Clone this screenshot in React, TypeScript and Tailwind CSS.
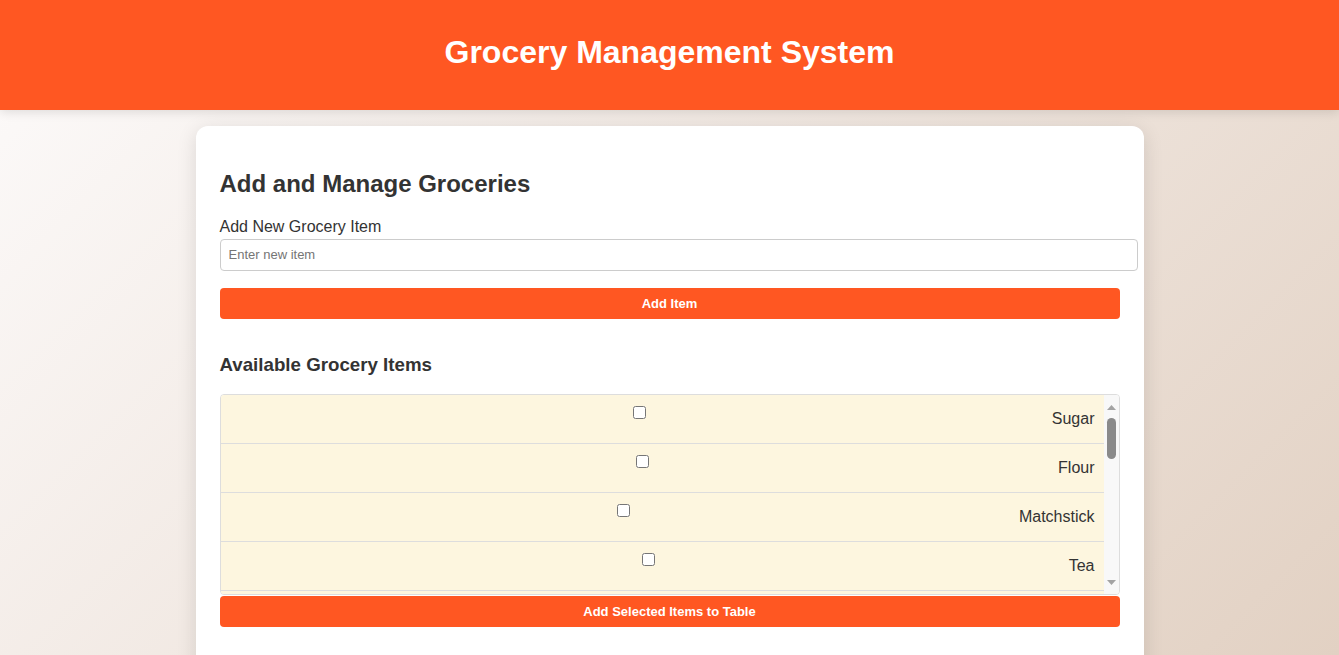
const groceries = [
  "Sugar",
  "Flour",
  "Matchstick",
  "Tea",
  "Rice",
  "Salt",
  "Milk",
  "Eggs",
  "Bread",
  "Butter",
  "Oil",
  "Coffee",
  "Lentils",
  "Soap",
];

function GroceryRow({ name }: { name: string }) {
  return (
    <li className="flex h-[49px] shrink-0 border-b border-[#ddd] bg-[#fdf6df] pl-[7px] pr-[9px]">
      <div className="flex flex-1 justify-center pt-[11px]">
        <input type="checkbox" className="m-0 h-[13px] w-[13px]" />
      </div>
      <label className="self-center text-base text-[#333]">{name}</label>
    </li>
  );
}

// headless browser hides native scrollbars, so draw the classic one
function ScrollBar() {
  return (
    <div className="flex w-[15px] shrink-0 flex-col bg-[#f8f8f8]">
      <div className="flex h-[20px] justify-center pt-[10px]">
        <svg width="9" height="5" viewBox="0 0 9 5">
          <path d="M4.5 0L9 5H0z" fill="#a3a3a3" />
        </svg>
      </div>
      <div className="mx-[3px] mt-[3px] h-[41px] rounded-full bg-[#8a8a8a]" />
      <div className="flex-1" />
      <div className="flex h-[20px] justify-center pt-[6px]">
        <svg width="9" height="5" viewBox="0 0 9 5">
          <path d="M0 0H9L4.5 5z" fill="#a3a3a3" />
        </svg>
      </div>
    </div>
  );
}

export default function App() {
  return (
    <div className="min-h-screen bg-[linear-gradient(135deg,#fdfbfb,#e2d1c3)] bg-fixed font-['Liberation_Sans',Arial,sans-serif] text-[#333]">
      <header className="flex h-[110px] items-center justify-center bg-[#ff5722] pb-[6px] shadow-[0_2px_10px_rgba(0,0,0,0.12)]">
        <h1 className="text-[32px] font-bold text-white">Grocery Management System</h1>
      </header>

      <main className="mx-auto mt-4 w-[948px] rounded-xl bg-white p-6 pb-10 shadow-[0_4px_20px_rgba(0,0,0,0.12)]">
        <h2 className="mt-[20px] text-2xl leading-[28px] font-bold text-[#333]">Add and Manage Groceries</h2>

        <label className="mt-[20px] block text-base leading-[18px] text-[#333]">Add New Grocery Item</label>
        <input
          type="text"
          placeholder="Enter new item"
          className="mt-[3px] box-content w-full rounded border border-[#ccc] px-2 py-[7px] text-[13px] leading-[16px] placeholder:text-[#757575]"
        />

        <button className="mt-[17px] h-[31px] w-full rounded bg-[#ff5722] text-[13px] font-bold text-white">
          Add Item
        </button>

        <h3 className="mt-[35px] text-[18.72px] font-bold leading-[22px] text-[#333]">
          Available Grocery Items
        </h3>

        <div className="mt-[18px] flex h-[201px] overflow-hidden rounded border border-[#ddd]">
          <ul className="flex flex-1 flex-col overflow-hidden">
            {groceries.map((g) => (
              <GroceryRow key={g} name={g} />
            ))}
          </ul>
          <ScrollBar />
        </div>

        <button className="mt-[1px] h-[31px] w-full rounded bg-[#ff5722] text-[13px] font-bold text-white">
          Add Selected Items to Table
        </button>

        <div className="h-24" />
      </main>
    </div>
  );
}
